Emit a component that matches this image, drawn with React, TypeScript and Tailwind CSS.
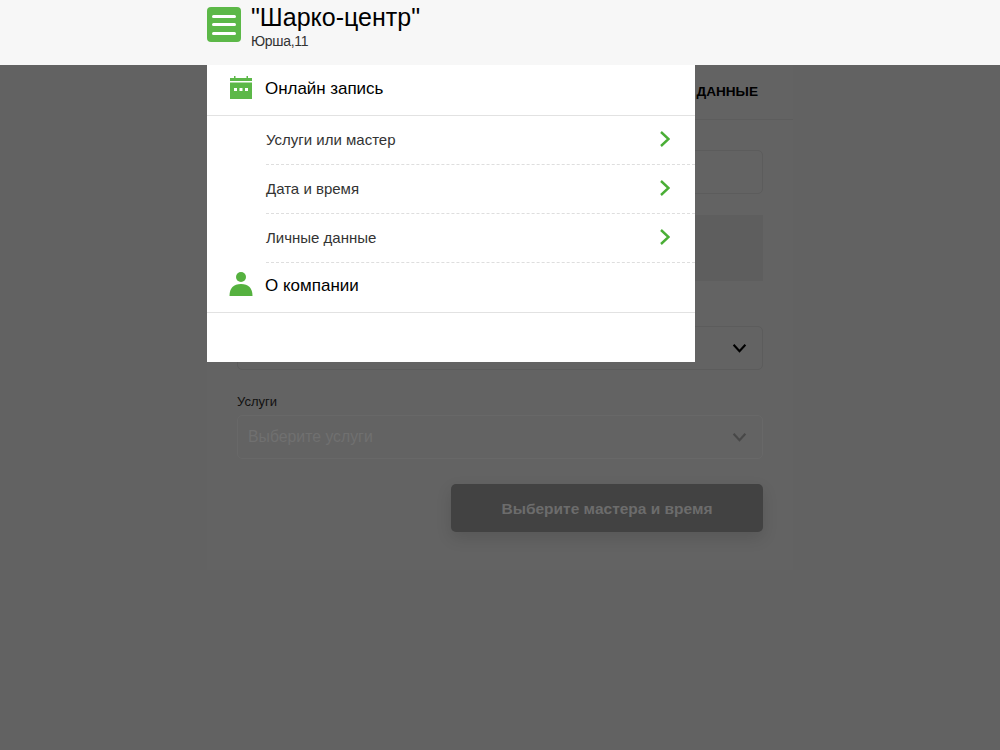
import React from "react";

const font = { fontFamily: '"Liberation Sans", Arial, sans-serif' };

function Chevron({ className }: { className: string }) {
  return (
    <svg viewBox="0 0 14 10" className={className} fill="none" stroke="currentColor" strokeWidth="2">
      <path d="M1.5 1.5 7 7.5l5.5-6" />
    </svg>
  );
}

function Right() {
  return (
    <svg width="10" height="16" viewBox="0 0 10 16" fill="none" stroke="#4aae36" strokeWidth="2.4" className="mr-[25px] mb-[2px]">
      <path d="M1 1l7.5 7L1 15" />
    </svg>
  );
}

function Row({ label }: { label: string }) {
  return (
    <div className="h-[49px] ml-[59px] flex items-center justify-between border-b border-dashed border-[#dedede]">
      <span className="text-[15px] text-[#333333]">{label}</span>
      <Right />
    </div>
  );
}

export default function App() {
  return (
    <div style={font} className="relative h-[750px] w-[1000px] overflow-hidden bg-[#626262]">
      <header className="h-[65px] bg-[#f7f7f7] pl-[207px] flex items-start">
        <div className="mt-[7px] w-[34px] h-[35px] rounded-[4px] bg-[#5cb848] flex flex-col justify-center items-center gap-[5.5px]">
          <span className="block w-[24px] h-[3px] rounded-sm bg-white" />
          <span className="block w-[24px] h-[3px] rounded-sm bg-white" />
          <span className="block w-[24px] h-[3px] rounded-sm bg-white" />
        </div>
        <div className="ml-[10px] mt-[3px]">
          <div className="text-[25px] leading-[29px] text-black">"Шарко-центр"</div>
          <div className="text-[14px] leading-[18px] text-[#333333] tracking-[-0.3px]">Юрша,11</div>
        </div>
      </header>

      <main className="ml-[207px] w-[586px] h-[505px] bg-[#636363]">
        <div className="h-[55px] border-b border-[#5d5d5d] flex items-center justify-end pr-[35px]">
          <span className="text-[13.6px] font-bold text-black">ДАННЫЕ</span>
        </div>
        <div className="px-[30px] pt-[30px]">
          <div className="h-[44px] rounded-[5px] border border-[#5c5c5c]" />
          <div className="mt-[21px] h-[66px] bg-[#5e5e5e]" />
          <div className="mt-[45px] h-[44px] rounded-[5px] border border-[#5c5c5c] flex items-center justify-end pr-[15px] text-black">
            <Chevron className="w-[15px] h-[11px]" />
          </div>
          <div className="mt-[24px] text-[13px] leading-[16px] text-[#111111]">Услуги</div>
          <div className="mt-[5px] h-[44px] rounded-[5px] border border-[#686868] flex items-center justify-between pl-[10px] pr-[15px]">
            <span className="text-[15.8px] text-[#707070]">Выберите услуги</span>
            <Chevron className="w-[15px] h-[11px] text-[#484848]" />
          </div>
          <div className="flex justify-end mt-[25px]">
            <div className="w-[312px] h-[48px] pt-[2px] rounded-[5px] bg-[#424242] shadow-[0_6px_16px_rgba(0,0,0,0.12)] flex items-center justify-center text-[15.5px] font-bold text-[#6c6c6c]">
              Выберите мастера и время
            </div>
          </div>
        </div>
      </main>

      <nav className="absolute left-[207px] top-[65px] w-[488px] h-[297px] bg-white">
        <div className="h-[51px] border-b border-[#e2e2e2] flex items-center">
          <svg width="22" height="23" viewBox="0 0 22 23" className="ml-[23px] mb-[5px]" fill="#5cb848">
            <path d="M0 2h4V0h1.500v2h11V0H18v2h4v3H0z" />
            <path fillRule="evenodd" d="M0 6.500h22V23H0zM4 12v3h3v-3zM9.500 12v3h3v-3zM15 12v3h3v-3z" />
          </svg>
          <span className="ml-[13px] mb-[2px] text-[17px] tracking-[-0.05px] text-black">Онлайн запись</span>
        </div>
        <Row label="Услуги или мастер" />
        <Row label="Дата и время" />
        <Row label="Личные данные" />
        <div className="h-[50px] border-b border-[#e2e2e2] flex items-center">
          <svg width="24" height="24" viewBox="0 0 24 24" className="ml-[22px] mb-[8px]" fill="#55b13f">
            <circle cx="12" cy="5" r="5" />
            <path d="M0.500 24c0-8 4-12 11.500-12s11.500 4 11.500 12z" />
          </svg>
          <span className="ml-[12px] mb-[4px] text-[17px] text-black">О компании</span>
        </div>
      </nav>
    </div>
  );
}
